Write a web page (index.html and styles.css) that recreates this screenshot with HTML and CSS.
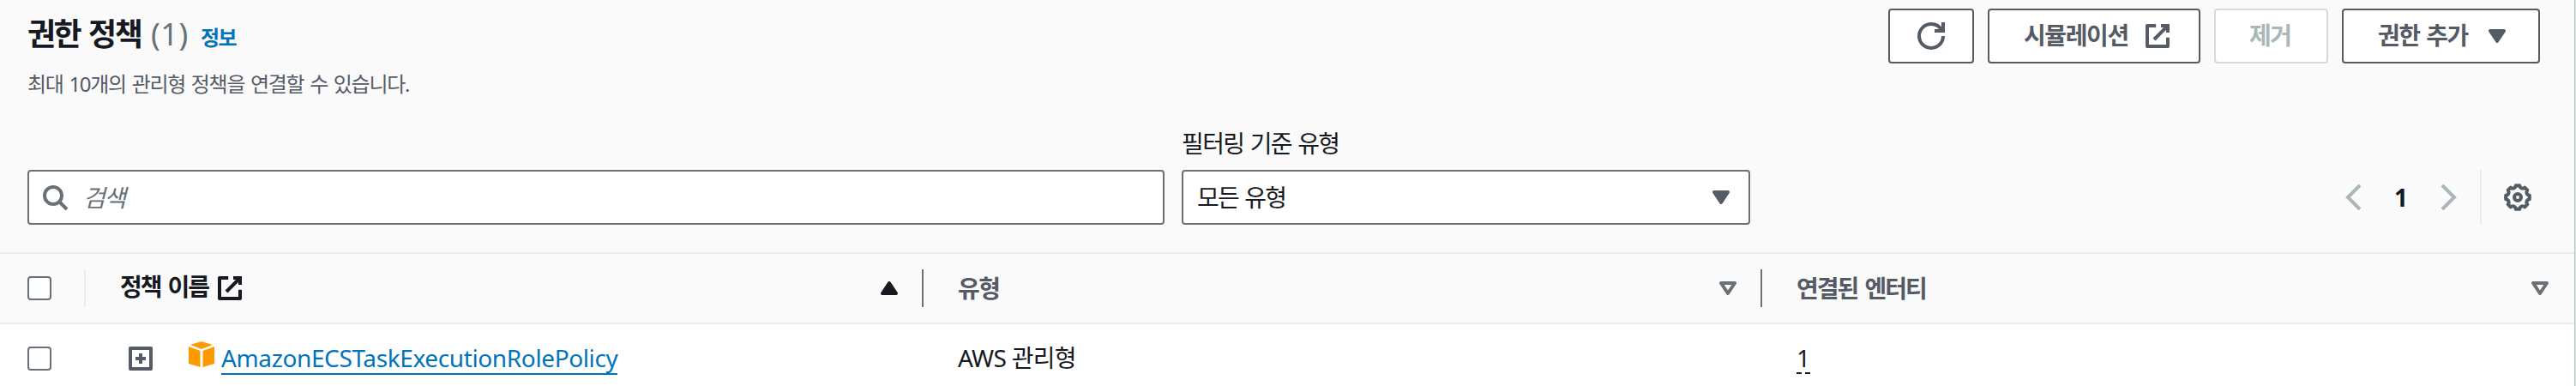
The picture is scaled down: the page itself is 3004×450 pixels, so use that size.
FILE: index.html
```html
<!DOCTYPE html>
<html lang="ko">
<head>
<meta charset="utf-8">
<title>권한 정책</title>
<link rel="stylesheet" href="styles.css">
</head>
<body>
<svg class="defs" width="0" height="0">
  <symbol id="external" viewBox="0 0 16 16"><path d="M14 8.900V14H2V2h5.100" class="round"/><path d="M10 2h4v4M6 10l8-8"/></symbol>
  <symbol id="caret" viewBox="0 0 16 16"><path class="solid" d="M4 5h8l-4 6z"/></symbol>
  <symbol id="caret-up" viewBox="0 0 16 16"><path class="solid" d="M4 11h8L8 5z"/></symbol>
  <symbol id="caret-open" viewBox="0 0 16 16"><path class="round" d="M4 5h8l-4 6z"/></symbol>
</svg>
<main class="panel">
  <header class="header">
    <div class="heading">
      <h1 class="title"><span class="title-text">권한 정책</span><span class="count">(1)</span><a class="info">정보</a></h1>
      <p class="description">최대 10개의 관리형 정책을 연결할 수 있습니다.</p>
    </div>
    <div class="actions">
      <button class="button refresh"><svg class="icon" viewBox="0 0 16 16"><path d="M15 8c0 3.900-3.100 7-7 7s-7-3.100-7-7 3.100-7 7-7c2.800 0 5.200 1.600 6.300 4"/><path d="M10 5h5V0"/></svg></button>
      <button class="button simulate"><span class="t-sim">시뮬레이션</span><svg class="icon"><use href="#external"/></svg></button>
      <button class="button remove" disabled><span class="t-remove">제거</span></button>
      <button class="button add"><span class="t-add">권한 추가</span><svg class="icon"><use href="#caret"/></svg></button>
    </div>
  </header>
  <section class="filters">
    <div class="search"><svg class="icon" viewBox="0 0 16 16"><circle cx="7" cy="7" r="5"/><path d="m15 15-4.500-4.500"/></svg><span class="placeholder">검색</span></div>
    <div class="type-filter">
      <label class="label">필터링 기준 유형</label>
      <div class="select"><span class="select-value">모든 유형</span><svg class="icon"><use href="#caret"/></svg></div>
    </div>
    <div class="paging">
      <svg class="icon chevron" viewBox="0 0 16 16"><path d="M12 1 5 8l7 7"/></svg>
      <span class="page">1</span>
      <svg class="icon chevron" viewBox="0 0 16 16"><path d="m4 1 7 7-7 7"/></svg>
      <div class="settings"><svg class="icon" viewBox="0 0 16 16"><path class="round" d="M14.910 9.100A1.800 1.800 0 0 0 13.660 12.110L12.110 13.660A1.800 1.800 0 0 0 9.100 14.910H6.900A1.800 1.800 0 0 0 3.890 13.660L2.340 12.110A1.800 1.800 0 0 0 1.090 9.100V6.900A1.800 1.800 0 0 0 2.340 3.890L3.890 2.340A1.800 1.800 0 0 0 6.900 1.090H9.100A1.800 1.800 0 0 0 12.110 2.340L13.660 3.890A1.800 1.800 0 0 0 14.910 6.900Z"/><circle cx="8" cy="8" r="2"/></svg></div>
    </div>
  </section>
  <section class="table">
    <div class="row head">
      <div class="cell select-cell"><span class="checkbox"></span></div>
      <div class="cell name-head"><span class="t-name">정책 이름</span><svg class="icon ext"><use href="#external"/></svg><svg class="icon sort"><use href="#caret-up"/></svg></div>
      <div class="cell type-head"><span class="t-type">유형</span><svg class="icon sort"><use href="#caret-open"/></svg></div>
      <div class="cell entity-head"><span class="t-entity">연결된 엔터티</span><svg class="icon sort"><use href="#caret-open"/></svg></div>
    </div>
    <div class="row body">
      <div class="cell select-cell"><span class="checkbox"></span></div>
      <div class="cell policy">
        <svg class="expand" viewBox="0 0 28 28"><rect x="2" y="2" width="24" height="24"/><path d="M8 14h12M14 8v12"/></svg>
        <svg class="cube" viewBox="0 0 30 30"><path d="M15 0 28 4 15 9 2 4ZM0 6l13.500 5v19L0 26ZM30 6l-13.500 5v19L30 26Z"/></svg>
        <a class="policy-link">AmazonECSTaskExecutionRolePolicy</a>
      </div>
      <div class="cell type-cell"><span class="t-aws">AWS 관리형</span></div>
      <div class="cell entity-cell"><span class="entity-count">1</span></div>
    </div>
  </section>
</main>
</body>
</html>
```
FILE: styles.css
```css
* { box-sizing: border-box; }
body {
  margin: 0;
  background: #fff;
  color: #16191f;
  font: 28px/40px "Noto Sans", "Noto Sans CJK KR", sans-serif;
  white-space: nowrap;
  overflow: hidden;
}
.defs { display: none; }
.panel {
  width: 3003px;
  height: 450px;
  border-right: 1px solid #b9c3c3;
  box-shadow: 1px 0 #dfe4e4;
  background: #fafafa;
}
.icon {
  width: 32px;
  height: 32px;
  flex: none;
  display: block;
  fill: none;
  stroke: currentColor;
  stroke-width: 2;
}
.solid { fill: currentColor; stroke-linejoin: round; }
.round { stroke-linejoin: round; }

.header {
  display: flex;
  justify-content: space-between;
  height: 150px;
  padding: 10px 40px 0 32px;
}
.title {
  display: flex;
  align-items: baseline;
  margin: 0;
  font-size: 36px;
  line-height: 60px;
}
.title-text { width: 144px; letter-spacing: -2.5px; word-spacing: 3px; }
.count { width: 58px; font-weight: 400; color: #687078; letter-spacing: 0.5px; }
.info { font-size: 24px; color: #0073bb; letter-spacing: -1.6px; }
.description {
  margin: 6px 0 0;
  font-size: 24px;
  line-height: 36px;
  letter-spacing: -1.3px;
  word-spacing: 1.9px;
  color: #545b64;
}
.actions { display: flex; gap: 16px; }
.button {
  display: flex;
  align-items: center;
  height: 64px;
  padding: 0 0 2px;
  border: 2px solid #545b64;
  border-radius: 4px;
  background: #fff;
  color: #545b64;
  font: inherit;
  font-weight: 700;
  letter-spacing: -1.5px;
}
.button .icon { margin-top: 2px; }
.refresh { width: 100px; padding-left: 32px; }
.simulate { width: 248px; padding-left: 40px; }
.t-sim { width: 140px; text-align: left; letter-spacing: -1.4px; }
.remove { width: 133px; padding-left: 39px; border-color: #d5dbdb; color: #aab7b8; }
.add { width: 231px; padding-left: 40px; }
.t-add { width: 123px; text-align: left; word-spacing: 2px; }

.filters {
  display: flex;
  align-items: flex-end;
  height: 144px;
  padding: 0 50px 32px 32px;
}
.search, .select {
  display: flex;
  align-items: center;
  height: 64px;
  border: 2px solid #687078;
  border-radius: 4px;
  background: #fff;
}
.search { width: 1326px; padding-left: 14px; color: #687078; }
.placeholder { margin-left: 17px; font-style: italic; letter-spacing: -1.5px; }
.type-filter { width: 663px; margin-left: 20px; }
.label { display: block; margin-bottom: 11px; letter-spacing: -1.6px; word-spacing: 1.5px; }
.select { justify-content: space-between; padding: 0 16px 0 16px; }
.select-value { letter-spacing: -1.7px; word-spacing: 1.5px; }
.select .icon { color: #545b64; }
.paging { display: flex; align-items: center; height: 64px; margin-left: auto; }
.chevron { color: #aab7b8; }
.page { width: 80px; text-align: center; font-weight: 700; }
.settings {
  display: flex;
  align-items: center;
  height: 64px;
  margin-left: 20px;
  padding-left: 26px;
  border-left: 2px solid #eaeded;
  color: #545b64;
}

.row {
  display: grid;
  grid-template-columns: 100px 977px 978px 947px;
}
.head {
  height: 84px;
  border-top: 2px solid #eaeded;
  border-bottom: 2px solid #eaeded;
  color: #545b64;
  font-weight: 700;
  letter-spacing: -1.5px;
  align-items: center;
}
.head .cell { display: flex; align-items: center; height: 44px; border-right: 2px solid #687078; }
.head .select-cell { border-color: #eaeded; }
.head .entity-head { border: 0; padding-right: 24px; }
.select-cell { padding-left: 32px; }
.checkbox {
  width: 28px;
  height: 28px;
  border: 2px solid #687078;
  border-radius: 4px;
  background: #fff;
}
.name-head { padding: 0 22px 0 40px; color: #16191f; }
.t-name { width: 112px; padding-bottom: 5px; letter-spacing: -2.1px; word-spacing: 3px; }
.type-head { padding: 0 22px 0 40px; }
.entity-head { padding-left: 40px; }
.t-entity { letter-spacing: -2px; word-spacing: 3px; }
.sort { margin-left: auto; color: #687078; }
.name-head .sort { color: #16191f; }

.body { height: 72px; background: #fff; }
.body .cell { display: flex; align-items: flex-start; padding-top: 19px; }
.body .checkbox { margin-top: 7px; }
.expand { width: 28px; height: 28px; margin: 7px 42px 0 50px; fill: none; stroke: #545b64; stroke-width: 4; stroke-linejoin: round; }
.cube { width: 30px; height: 30px; margin: 1px 8px 0 0; fill: #ff9900; }
.policy-link {
  width: 462px;
  height: 40px;
  border-bottom: 2px solid #0073bb;
  color: #0073bb;
  letter-spacing: -0.38px;
}
.type-cell { padding-left: 40px; }
.t-aws { letter-spacing: -0.7px; }
.entity-cell { padding-left: 40px; }
.entity-count {
  width: 16px;
  height: 39px;
  background: repeating-linear-gradient(90deg, #16191f 0 6px, transparent 6px 10px) 0 100% / 16px 2px no-repeat;
}
```
